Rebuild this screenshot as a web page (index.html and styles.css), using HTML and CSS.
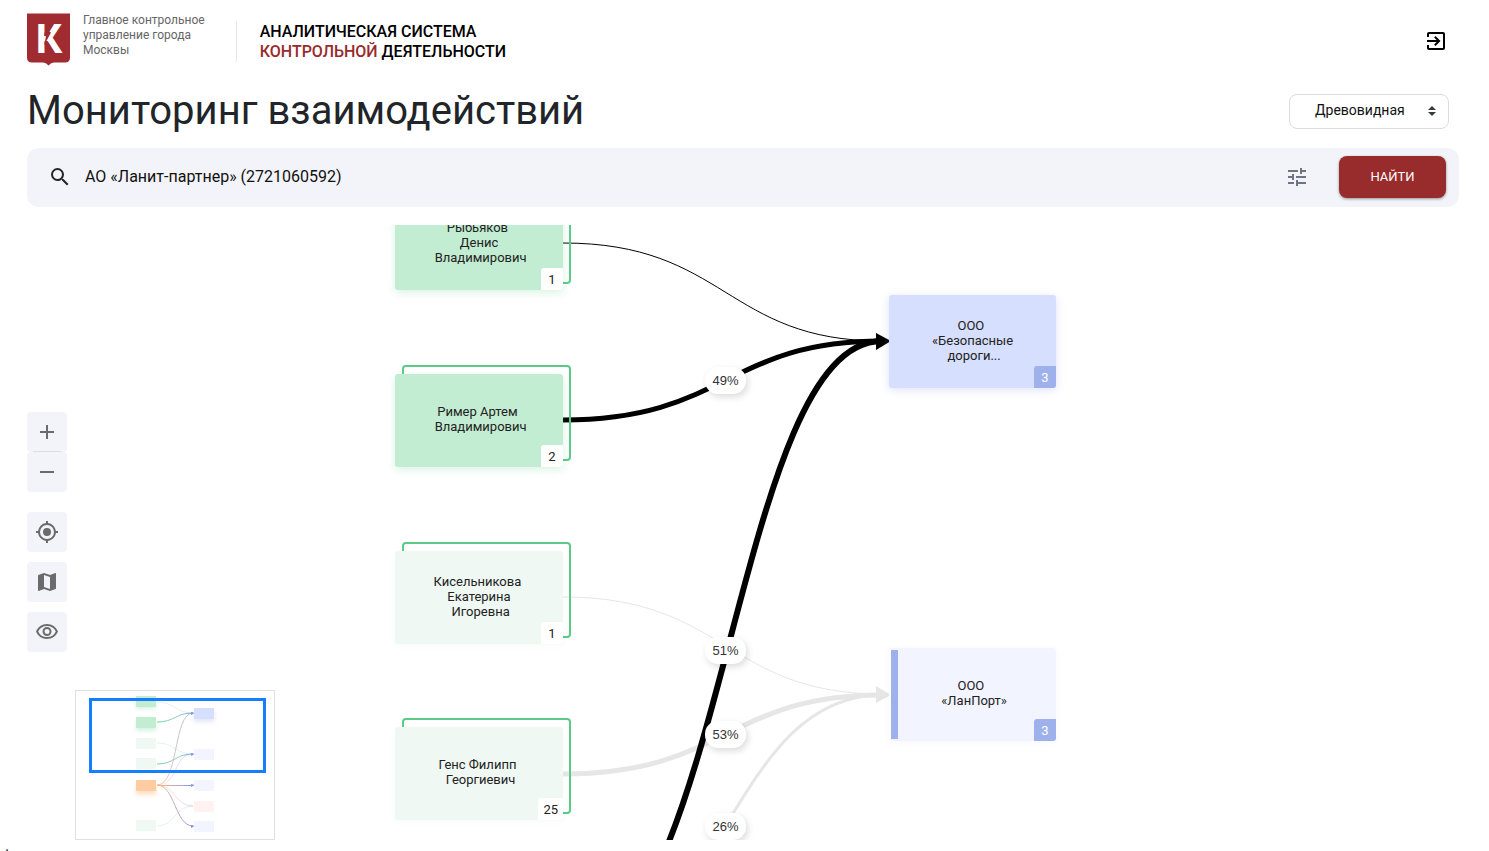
FILE: index.html
```html
<!DOCTYPE html>
<html lang="ru">
<head>
  <meta charset="utf-8">
  <meta name="viewport" content="width=device-width, initial-scale=1">
  <title>Мониторинг взаимодействий</title>
  <link rel="stylesheet" href="styles.css">
</head>
<body>
  <header class="header">
    <svg class="logo" viewBox="0 0 43 52" aria-hidden="true">
      <path fill="#a02c32" d="M0 0h43v44q0 5-5 5H27q-3 0-5.500 3-2.500-3-5.500-3H5q-5 0-5-5z"/>
      <text class="logo-letter" x="22" y="39" text-anchor="middle">К</text>
      <path fill="#a02c32" d="M20 9h3l-1 9 2 1-7 13 2-9-2-1z"/>
    </svg>
    <p class="owner">Главное контрольное<br>управление города<br>Москвы</p>
    <p class="system">АНАЛИТИЧЕСКАЯ СИСТЕМА<br><span class="accent">КОНТРОЛЬНОЙ</span> ДЕЯТЕЛЬНОСТИ</p>
    <button class="exit" type="button" aria-label="Выйти">
      <svg viewBox="0 0 24 24"><path d="M3 8V5q0-2 2-2h14q2 0 2 2v14q0 2-2 2H5q-2 0-2-2v-3h2v3h14V5H5v3zM3 11h9.700l-2.600-2.600L11.500 7l5 5-5 5-1.400-1.400 2.600-2.600H3z"/></svg>
    </button>
  </header>

  <main class="main">
    <div class="title-row">
      <h1 class="title">Мониторинг взаимодействий</h1>
      <div class="view">
        <select class="view-select" aria-label="Вид схемы">
          <option>Древовидная</option>
        </select>
        <svg class="view-arrows" viewBox="0 0 8 10" aria-hidden="true"><path d="M4 0l4 4H0zM4 10L0 6h8z"/></svg>
      </div>
    </div>

    <form class="search">
      <label class="search-label" for="query" aria-label="Поиск">
        <svg viewBox="0 0 24 24"><path d="M15.500 14h-.79l-.28-.27A6.470 6.470 0 0 0 16 9.500 6.500 6.500 0 1 0 9.500 16c1.610 0 3.090-.59 4.230-1.570l.27.280v.79l5 4.990L20.490 19zm-6 0a4.500 4.500 0 1 1 0-9 4.500 4.500 0 0 1 0 9z"/></svg>
      </label>
      <input class="search-input" id="query" type="text" value="АО «Ланит-партнер» (2721060592)">
      <button class="filters" type="button" aria-label="Фильтры">
        <svg viewBox="0 0 24 24"><path d="M3 17v2h6v-2H3zM3 5v2h10V5H3zm10 16v-2h8v-2h-8v-2h-2v6h2zM7 9v2H3v2h4v2h2V9H7zm14 4v-2H11v2h10zm-6-4h2V7h4V5h-4V3h-2v6z"/></svg>
      </button>
      <button class="submit" type="button">НАЙТИ</button>
    </form>

    <section class="canvas" aria-label="Схема взаимодействий">
      <svg class="edges" aria-hidden="true">
        <g class="edges-dim">
          <path stroke-width="1" d="M536 372C699 372 699 469 855 469"/>
          <path stroke-width="5" d="M536 549C699 549 699 470 855 470"/>
          <path stroke-width="3" d="M536 733C699 733 699 470 855 470"/>
          <path class="arrow" d="M849 461l15 9-15 8z"/>
        </g>
        <g class="edges-active">
          <path stroke-width="1" d="M536 18C699 18 699 116 855 116"/>
          <path stroke-width="5" d="M536 195C699 195 699 116 855 116"/>
          <path stroke-width="6" d="M536 733C699 733 705 116 855 116"/>
          <path class="arrow" d="M849 108l15 8-15 9z"/>
        </g>
      </svg>

      <article class="node person n1"><p class="name">Рыбьяков 
Денис
 Владимирович</p><span class="count">1</span></article>
      <article class="node person n2"><p class="name">Ример Артем 
 Владимирович</p><span class="count">2</span></article>
      <article class="node person dim n3"><p class="name">Кисельникова 
Екатерина
 Игоревна</p><span class="count">1</span></article>
      <article class="node person dim n4"><p class="name">Генс Филипп 
 Георгиевич</p><span class="count">25</span></article>
      <article class="node company n5"><p class="name">ООО 
«Безопасные
 дороги...</p><span class="count">3</span></article>
      <article class="node company dim marked n6"><p class="name">ООО 
 «ЛанПорт»</p><span class="count">3</span></article>

      <span class="share s1">49%</span>
      <span class="share s2">51%</span>
      <span class="share s3">53%</span>
      <span class="share s4">26%</span>

      <div class="tools">
        <div class="zoom">
          <button class="tool" type="button" aria-label="Приблизить"><svg viewBox="0 0 24 24"><path d="M19 13h-6v6h-2v-6H5v-2h6V5h2v6h6z"/></svg></button>
          <button class="tool" type="button" aria-label="Отдалить"><svg viewBox="0 0 24 24"><path d="M5 11h14v2H5z"/></svg></button>
        </div>
        <button class="tool" type="button" aria-label="К центру"><svg viewBox="0 0 24 24"><path d="M12 8a4 4 0 1 0 0 8 4 4 0 0 0 0-8zm8.940 3A8.990 8.990 0 0 0 13 3.060V1h-2v2.060A8.990 8.990 0 0 0 3.060 11H1v2h2.060A8.990 8.990 0 0 0 11 20.940V23h2v-2.060A8.990 8.990 0 0 0 20.940 13H23v-2zM12 19a7 7 0 1 1 0-14 7 7 0 0 1 0 14z"/></svg></button>
        <button class="tool" type="button" aria-label="Карта"><svg viewBox="0 0 24 24"><path d="M20.500 3l-.16.030L15 5.100 9 3 3.360 4.900a.5.500 0 0 0-.36.480V20.500a.5.500 0 0 0 .5.500l.16-.03L9 18.900l6 2.100 5.640-1.900a.5.500 0 0 0 .36-.48V3.500a.5.500 0 0 0-.5-.5zM15 19l-6-2.110V5l6 2.110z"/></svg></button>
        <button class="tool" type="button" aria-label="Видимость"><svg viewBox="0 0 24 24"><path d="M12 6a9.770 9.770 0 0 1 8.820 5.500 9.760 9.760 0 0 1-17.640 0A9.770 9.770 0 0 1 12 6m0-2C7 4 2.730 7.110 1 11.500 2.730 15.890 7 19 12 19s9.270-3.110 11-7.500C21.270 7.110 17 4 12 4zm0 5a2.500 2.500 0 1 1 0 5 2.500 2.500 0 0 1 0-5m0-2a4.500 4.500 0 1 0 0 9 4.500 4.500 0 0 0 0-9z"/></svg></button>
      </div>

      <svg class="minimap" viewBox="1 1 198 148" role="img" aria-label="Миникарта">
        <defs>
          <linearGradient id="gb" gradientUnits="userSpaceOnUse" x1="82" y1="0" x2="119" y2="0"><stop offset="0" stop-color="#74d39b"/><stop offset=".5" stop-color="#8fd0b4"/><stop offset="1" stop-color="#8ea2ef"/></linearGradient>
          <linearGradient id="ob" gradientUnits="userSpaceOnUse" x1="82" y1="0" x2="119" y2="0"><stop offset="0" stop-color="#ffb780"/><stop offset="1" stop-color="#849bea"/></linearGradient>
          <filter id="glow" x="-50%" y="-50%" width="200%" height="220%"><feGaussianBlur stdDeviation="2"/></filter>
        </defs>
        <g filter="url(#glow)" opacity=".3">
          <path fill="#7bd9a0" d="M61 8h20v11H61zM61 30h20v11H61z"/>
          <path fill="#9fb1ec" d="M119 21h20v11h-20z"/>
          <path fill="#ff9c45" d="M61 94h20v11H61z"/>
        </g>
        <g fill="none">
          <path stroke="#e2f3ea" d="M82 12C100 12 100 23 118 23M82 53C100 53 100 64 118 64M82 136C100 136 100 116 118 116"/>
          <path stroke="url(#gb)" d="M82 32C100 32 100 23 118 23M82 74C100 74 100 64 118 64"/>
          <path stroke="url(#ob)" opacity=".7" d="M82 95C104 95 98 23 118 23"/>
          <path stroke="url(#ob)" opacity=".35" d="M82 95C104 95 98 64 118 64M82 95C100 95 100 116 118 116"/>
          <path stroke="url(#ob)" d="M82 95.500H118M82 95C100 95 100 136 118 136"/>
        </g>
        <path fill="#7f96ea" d="M116 22l4 1-4 2zM116 63l4 1-4 2zM116 94l4 1-4 2zM116 135l4 1-4 2z"/>
        <path fill="#c2edd2" d="M61 6h20v11H61zM61 27h20v11H61z"/>
        <path fill="#eff8f3" d="M61 48h20v11H61zM61 68h20v11H61zM61 130h20v11H61z"/>
        <path fill="#ffcba0" d="M61 90h20v11H61z"/>
        <path fill="#d6dffd" d="M119 18h20v11h-20z"/>
        <path fill="#f2f5ff" d="M119 59h20v11h-20zM119 90h20v11h-20zM119 131h20v11h-20z"/>
        <path fill="#fff2f0" d="M119 111h20v11h-20z"/>
        <rect x="15.500" y="9.500" width="174" height="72" fill="none" stroke="#147efb" stroke-width="3"/>
      </svg>
    </section>
  </main>
  <footer class="footer">.</footer>
</body>
</html>
```
FILE: styles.css
```css
*,
*::before,
*::after {
  box-sizing: border-box;
}

body {
  margin: 0;
  min-height: 100vh;
  display: flex;
  flex-direction: column;
  background: #fff;
  color: #212529;
  font-family: Roboto, "Liberation Sans", sans-serif;
  overflow: hidden;
}

p,
h1 {
  margin: 0;
}

button,
select,
input {
  margin: 0;
  padding: 0;
  border: 0;
  background: none;
  color: inherit;
  font-family: inherit;
}

svg {
  display: block;
}

.header {
  display: flex;
  align-items: flex-start;
  padding: 13px 41px 0 27px;
}

.logo {
  width: 43px;
  height: 53px;
}

.logo-letter {
  fill: #fff;
  font: 700 41px Roboto, sans-serif;
}

.owner {
  margin-left: 13px;
  color: #666;
  font-size: 12px;
  line-height: 15px;
}

.system {
  margin: 8px 0 0 31px;
  padding: 1px 0 0 23px;
  border-left: 1px solid #e4e7f0;
  color: #000;
  font-size: 16px;
  font-weight: 500;
  line-height: 20px;
}

.accent {
  color: #982b2b;
}

.exit {
  margin: 16px 0 0 auto;
}

.exit svg,
.search-label svg,
.filters svg,
.tool svg {
  width: 24px;
  height: 24px;
  fill: currentColor;
}

.exit {
  color: #000;
}

.main {
  flex: 1;
  display: flex;
  flex-direction: column;
  padding: 20px 30px 0 27px;
}

.title-row {
  display: flex;
  align-items: center;
  justify-content: space-between;
  padding-right: 10px;
}

.title {
  font-size: 40px;
  font-weight: 400;
  line-height: 50px;
}

.view {
  position: relative;
}

.view-select {
  appearance: none;
  width: 160px;
  height: 35px;
  padding: 0 32px 2px 25px;
  border: 1px solid #dcdcde;
  border-radius: 8px;
  background: #fff;
  color: #111;
  font-size: 14px;
}

.view-arrows {
  position: absolute;
  top: 12px;
  right: 13px;
  width: 8px;
  height: 10px;
  fill: #343a40;
}

.search {
  display: flex;
  align-items: center;
  margin-top: 12px;
  height: 59px;
  padding: 0 13px 2px 21px;
  border-radius: 12px;
  background: #f3f4f9;
}

.search-input {
  flex: 1;
  margin-left: 13px;
  color: #111;
  font-size: 16px;
  outline: 0;
}

.filters {
  color: #6f7482;
}

.submit {
  width: 107px;
  height: 42px;
  margin-left: 30px;
  border-radius: 8px;
  background: #982b2b;
  box-shadow: 0 1px 3px rgba(0, 0, 0, .4);
  color: #fff;
  font-size: 13px;
}

.canvas {
  position: relative;
  flex: 1;
  min-height: 611px;
  margin-top: 18px;
  overflow: hidden;
}

.edges {
  position: absolute;
  inset: 0;
  width: 100%;
  height: 100%;
  fill: none;
}

.edges-dim {
  stroke: #e6e6e6;
}

.edges-active {
  stroke: #000;
}

.edges-dim .arrow {
  fill: #e6e6e6;
  stroke: none;
}

.edges-active .arrow {
  fill: #000;
  stroke: none;
}

.node {
  position: absolute;
  display: flex;
  align-items: center;
  justify-content: center;
  width: 168px;
  height: 93px;
  padding-bottom: 3px;
  border-radius: 3px;
}

/* The outline of the stacked card behind a person */
.person::before {
  content: "";
  position: absolute;
  top: -9px;
  right: -8px;
  width: 169px;
  height: 96px;
  border: 2px solid #5acb87;
  border-radius: 4px;
  clip-path: polygon(0 0, 100% 0, 100% 100%, 161px 100%, 161px 9px, 0 9px);
}

.person {
  background: #c2edd2;
  box-shadow: 0 3px 8px rgba(90, 203, 135, .22);
}

.person.dim {
  background: #eff8f3;
  box-shadow: 0 2px 6px rgba(90, 203, 135, .06);
}

.company {
  width: 167px;
  background: #d6dffd;
  box-shadow: 0 2px 8px rgba(127, 150, 234, .25);
}

.company.dim {
  background: #f2f5ff;
  box-shadow: 0 1px 6px rgba(127, 150, 234, .08);
}

.marked::before {
  content: "";
  position: absolute;
  top: 2px;
  bottom: 2px;
  left: 0;
  width: 9px;
  border-left: 2px solid #fff;
  background: #9fb1ec;
}

.n1 { left: 368px; top: -28px; }
.n2 { left: 368px; top: 149px; }
.n3 { left: 368px; top: 326px; }
.n4 { left: 368px; top: 502px; }
.n5 { left: 862px; top: 70px; }
.n6 { left: 862px; top: 423px; }

.name {
  color: #222;
  font-size: 13px;
  line-height: 15px;
  text-align: center;
  white-space: pre;
}

.count {
  position: absolute;
  right: 0;
  bottom: 0;
  min-width: 22px;
  height: 22px;
  padding: 0 5px;
  border-radius: 3px 0 3px 0;
  background: #fff;
  color: #222;
  font-size: 13px;
  line-height: 23px;
  text-align: center;
}

.company .count {
  background: #9fb1ec;
  color: #fff;
}

.share {
  position: absolute;
  left: 678px;
  width: 41px;
  height: 27px;
  border-radius: 13px;
  background: #fff;
  box-shadow: 2px 3px 7px rgba(0, 0, 0, .14);
  color: #333;
  font: 13px/27px "Liberation Sans", Arial, sans-serif;
  text-align: center;
}

.s1 { top: 142px; }
.s2 { top: 412px; }
.s3 { top: 496px; }
.s4 { top: 588px; }

.tools {
  position: absolute;
  left: 0;
  bottom: 188px;
  display: flex;
  flex-direction: column;
  gap: 10px;
  color: #6b6b6b;
}

.zoom {
  position: relative;
  display: flex;
  flex-direction: column;
  margin-bottom: 10px;
}

.zoom::after {
  content: "";
  position: absolute;
  top: 39px;
  left: 6px;
  right: 6px;
  height: 1px;
  background: #dcdde2;
}

.tool {
  display: flex;
  align-items: center;
  justify-content: center;
  width: 40px;
  height: 40px;
  border-radius: 4px;
  background: #f3f4f9;
}

.minimap {
  position: absolute;
  left: 48px;
  bottom: 0;
  width: 200px;
  height: 150px;
  border: 1px solid #e0e0e0;
  background: #fff;
}

.footer {
  padding-left: 5px;
  font-size: 16px;
  line-height: 11px;
}
```
